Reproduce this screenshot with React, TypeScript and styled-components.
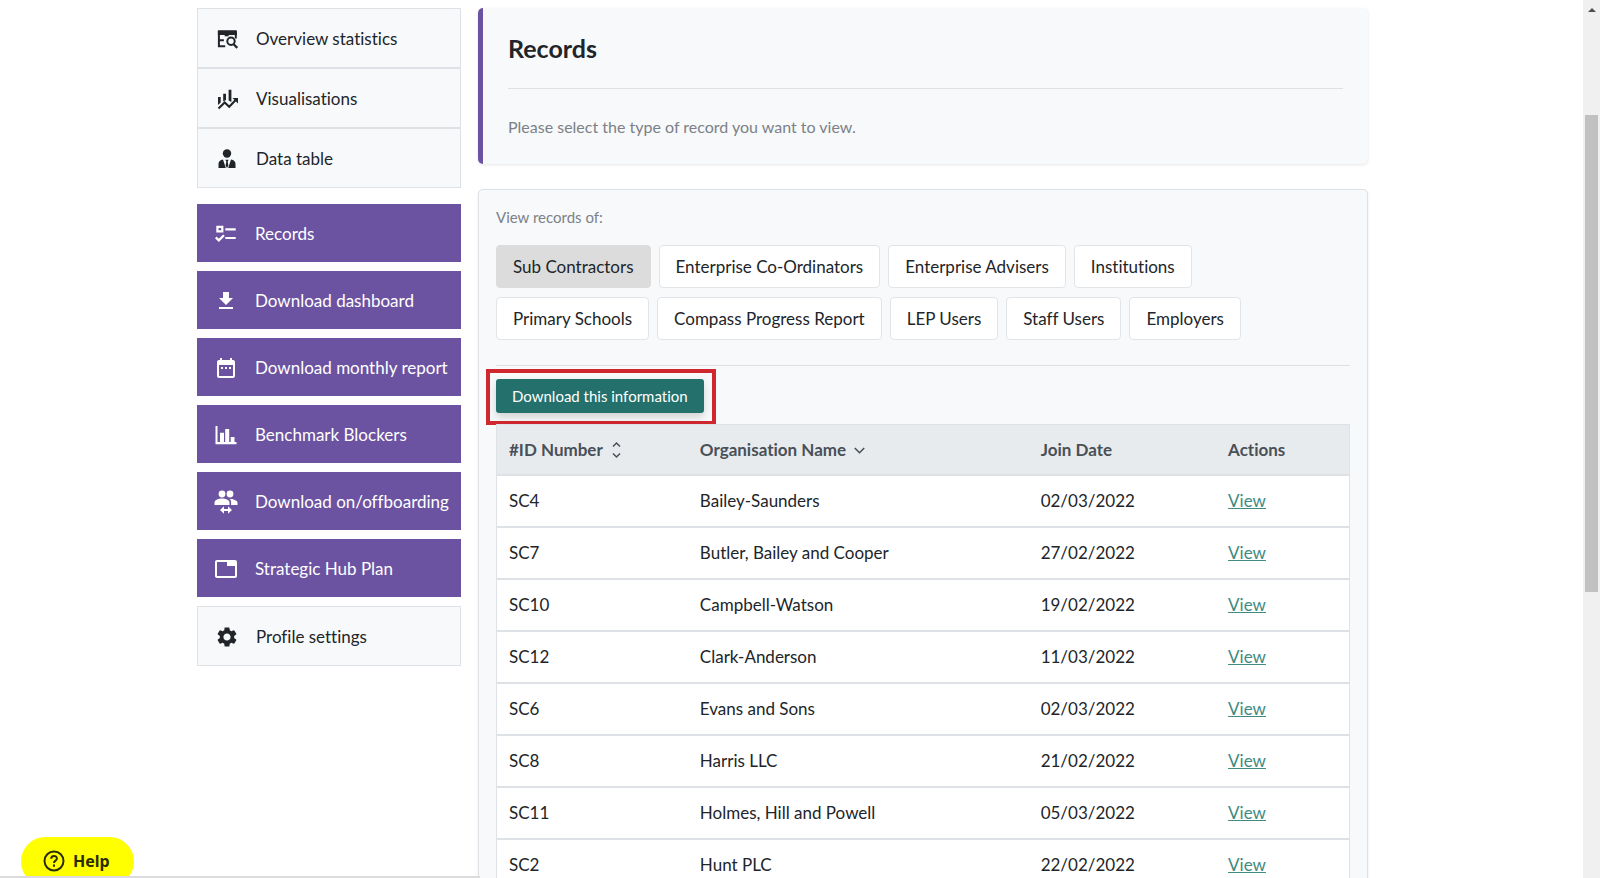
import React from "react";
import styled, { createGlobalStyle } from "styled-components";
import { MdDateRange, MdDownload, MdSettings, MdTab } from "react-icons/md";

const GlobalStyle = createGlobalStyle`
  *, *::before, *::after { box-sizing: border-box; }
  body {
    margin: 0;
    background: #fff;
    color: #212529;
    font-family: Lato, "Liberation Sans", sans-serif;
    font-size: 17px;
    line-height: 24px;
    font-variant-ligatures: none;
  }
  button { font: inherit; font-variant-ligatures: inherit; color: inherit; cursor: pointer; }
`;

const Shell = styled.div`
  display: flex;
  height: 100vh;
  overflow: hidden;
`;

const Viewport = styled.div`
  flex: 1;
  min-width: 0;
  overflow-y: auto;
  scrollbar-width: none;
`;

const Page = styled.div`
  display: grid;
  grid-template-columns: 264px minmax(0, 1fr);
  column-gap: 17px;
  align-items: start;
  max-width: 1189px;
  margin: 0 auto;
  padding: 8px 18px 32px 0;
`;

const Sidebar = styled.nav`
  display: flex;
  flex-direction: column;
  gap: 9px;
`;

const PlainGroup = styled.div`
  display: flex;
  flex-direction: column;
  margin-bottom: 7px;
  border: 1px solid #dee2e6;
  background: #f8f9fb;
`;

const NavLink = styled.a`
  display: flex;
  align-items: center;
  gap: 17px;
  padding: 2px 17px 0;
  white-space: nowrap;
  text-decoration: none;
  svg { flex: none; width: 24px; height: 24px; }
`;

const PlainLink = styled(NavLink)`
  height: 58px;
  color: #212529;
  & + & { height: 60px; border-top: 2px solid #dee2e6; }
`;

const PurpleLink = styled(NavLink)`
  height: 58px;
  background: #6b53a1;
  color: #fff;
`;

const Main = styled.main`
  display: flex;
  flex-direction: column;
  gap: 25px;
`;

const Intro = styled.header`
  padding: 24px 25px 25px 25px;
  border-left: 5px solid #6b53a1;
  border-radius: 5px;
  background: #f8f9fb;
  box-shadow: 0 1px 3px rgba(0, 0, 0, 0.1);
`;

const Title = styled.h1`
  margin: 0;
  padding-bottom: 24px;
  border-bottom: 1px solid #dee2e6;
  font-size: 25px;
  line-height: 32px;
  font-weight: 700;
`;

const Lead = styled.p`
  margin: 26px 0 0;
  color: #7b8187;
  font-size: 16px;
`;

const Panel = styled.section`
  padding: 15px 17px 32px;
  border: 1px solid #dee2e6;
  border-radius: 5px;
  background: #f8f9fb;
  box-shadow: 0 1px 3px rgba(0, 0, 0, 0.08);
`;

const FilterLabel = styled.p`
  margin: 0 0 16px;
  color: #7b8187;
  font-size: 15px;
`;

const Filters = styled.div`
  display: flex;
  flex-wrap: wrap;
  gap: 9px 8px;
  padding-bottom: 25px;
  border-bottom: 1px solid #dee2e6;
`;

const FilterButton = styled.button<{ $active?: boolean }>`
  height: 43px;
  padding: 0 16px;
  border: 1px solid ${(p) => (p.$active ? "#dcdcdc" : "#e2e5e8")};
  border-radius: 4px;
  background: ${(p) => (p.$active ? "#dcdcdc" : "#fff")};
`;

const Highlight = styled.div`
  width: fit-content;
  margin: 3px 0 -1px -10px;
  padding: 6px 8px 8px 6px;
  border: 4px solid #d0282f;
`;

const DownloadButton = styled.button`
  display: block;
  height: 34px;
  padding: 0 16px;
  border: 0;
  border-radius: 3px;
  background: #24706c;
  color: #fff;
  font-size: 15px;
  box-shadow: 0 4px 8px rgba(0, 0, 0, 0.16);
`;

const Table = styled.table`
  width: 100%;
  table-layout: fixed;
  border-collapse: separate;
  border-spacing: 0;
  border: 1px solid #dee2e6;
  background: #fff;
`;

const Th = styled.th<{ $width?: string }>`
  width: ${(p) => p.$width ?? "auto"};
  height: 51px;
  padding: 0 12px;
  border-bottom: 2px solid #dee2e6;
  background: #e8ebee;
  color: #495057;
  font-weight: 700;
  text-align: left;
`;

const SortButton = styled.button`
  display: inline-flex;
  align-items: center;
  gap: 8px;
  padding: 0;
  border: 0;
  background: none;
  font-weight: 700;
  svg { width: 11px; height: 18px; }
`;

const Td = styled.td`
  height: 52px;
  padding: 0 12px;
  border-bottom: 2px solid #dee2e6;
`;

const ViewLink = styled.a`
  color: #3f8a82;
  text-decoration: underline;
`;

const ScrollTrack = styled.div`
  display: flex;
  flex-direction: column;
  flex: none;
  width: 17px;
  padding: 8px 2px;
  background: #f0f0f0;
`;

const ScrollArrow = styled.svg`
  width: 8px;
  height: 4px;
  margin: 0 auto;
`;

const ScrollSpace = styled.div`
  flex: 103;
`;

const ScrollThumb = styled.div`
  flex: 477;
  background: #c1c1c1;
`;

const ScrollRest = styled.div`
  flex: 278;
`;

const HelpButton = styled.button`
  position: fixed;
  left: 21px;
  bottom: -8px;
  display: flex;
  align-items: center;
  gap: 8px;
  height: 49px;
  padding: 0 24px 2px 22px;
  border: 0;
  border-radius: 25px;
  background: #ff0;
  color: #2b2b00;
  font-family: "Noto Sans", sans-serif;
  font-size: 16px;
  font-weight: 700;
  svg { width: 22px; height: 22px; }
`;

const StatusEdge = styled.div`
  position: fixed;
  left: 0;
  bottom: 0;
  width: 30%;
  height: 2px;
  background: #dcdcdc;
`;

const OverviewIcon = () => (
  <svg viewBox="0 0 24 24" fill="none" stroke="currentColor" strokeWidth="2" aria-hidden="true">
    <path d="M3 3.300h18a1 1 0 0 1 1 1V8H2.900V4z" fill="currentColor" stroke="none" />
    <path d="M3.900 4v15.300h6.300M3.900 13.200h5M20.800 6v5.500" />
    <path d="M9.700 7.500h4v1.800h-4z" fill="currentColor" stroke="none" />
    <circle cx="16" cy="14.300" r="3.700" />
    <path d="M18.600 17.200l3.700 3.700" strokeWidth="2.200" />
  </svg>
);

const VisualisationsIcon = () => (
  <svg viewBox="0 0 24 24" fill="currentColor" aria-hidden="true">
    <path d="M3 10h2.700v5.500L3 18zM8.200 6.700H11V13l-2.800 1.500zM13.600 2.700h2.800V15l-2.800-1.500z" />
    <path d="M3.500 21.500l6.200-6 4.500 4.300 7-7.300" fill="none" stroke="currentColor" strokeWidth="2" />
    <path d="M17.500 11H23v5.500z" />
  </svg>
);

const PersonIcon = () => (
  <svg viewBox="0 0 24 24" fill="currentColor" aria-hidden="true">
    <circle cx="12" cy="6.500" r="4.200" />
    <path d="M8 12.400L10.800 21H3.500v-4.200c0-2.400 1.700-3.900 4.500-4.400zM16 12.400L13.200 21h7.300v-4.200c0-2.400-1.700-3.900-4.500-4.400zM10.400 12.800h3.200l-.9 2 .7 3.700L12 21l-1.400-2.500.7-3.700z" />
  </svg>
);

const RecordsIcon = () => (
  <svg viewBox="0 0 24 24" fill="none" stroke="currentColor" strokeWidth="2.200" aria-hidden="true">
    <path d="M3.400 4.900h4.900v4.400H3.400z" />
    <path d="M11.300 7.400h10.400M11.300 16h10.400" />
    <path d="M1.800 15.400l3 3 5.200-5.200" />
  </svg>
);

const BlockersIcon = () => (
  <svg viewBox="0 0 24 24" fill="currentColor" aria-hidden="true">
    <path d="M1.500 3h2v16H6V9.800h4V19h1.200V6h4v13h1.500v-5h3.800v5h2v2.200h-21z" />
  </svg>
);

const BoardingIcon = () => (
  <svg viewBox="0 0 24 24" fill="currentColor" aria-hidden="true">
    <circle cx="8" cy="4" r="3.400" />
    <circle cx="16" cy="4" r="3.400" />
    <path d="M.5 15v-2.300C.5 10 4.800 8.600 8 8.600s7.500 1.400 7.500 4.100V15z" />
    <path d="M15.500 8.700c3.500.2 8 1.500 8 4V15h-6.400v-2.300c0-1.700-.4-3-1.600-4z" />
    <path d="M6 20l4-3.700v2.700h4v-2.700l4 3.700-4 3.700V21h-4v2.700z" />
  </svg>
);

const SortBothIcon = () => (
  <svg viewBox="0 0 11 18" fill="none" stroke="currentColor" strokeWidth="1.500" aria-hidden="true">
    <path d="M2 5.500L5.500 2 9 5.500M2 12.500L5.500 16 9 12.500" />
  </svg>
);

const SortDownIcon = () => (
  <svg viewBox="0 0 11 18" fill="none" stroke="currentColor" strokeWidth="1.600" aria-hidden="true">
    <path d="M.8 7l4.700 4.700L10.200 7" />
  </svg>
);

const HelpIcon = () => (
  <svg viewBox="0 0 22 22" fill="none" stroke="currentColor" strokeWidth="2" aria-hidden="true">
    <circle cx="11" cy="11" r="9.500" />
    <path d="M8.200 8.800c0-3.800 5.700-3.600 5.700-.4 0 2.200-2.900 2.200-2.900 4.500" />
    <path d="M11 14.600v2.200" />
  </svg>
);

const overviewLinks = [
  { label: "Overview statistics", icon: <OverviewIcon /> },
  { label: "Visualisations", icon: <VisualisationsIcon /> },
  { label: "Data table", icon: <PersonIcon /> },
];

const actionLinks = [
  { label: "Records", icon: <RecordsIcon /> },
  { label: "Download dashboard", icon: <MdDownload /> },
  { label: "Download monthly report", icon: <MdDateRange /> },
  { label: "Benchmark Blockers", icon: <BlockersIcon /> },
  { label: "Download on/offboarding", icon: <BoardingIcon /> },
  { label: "Strategic Hub Plan", icon: <MdTab /> },
];

const filters = [
  "Sub Contractors",
  "Enterprise Co-Ordinators",
  "Enterprise Advisers",
  "Institutions",
  "Primary Schools",
  "Compass Progress Report",
  "LEP Users",
  "Staff Users",
  "Employers",
];

const records = [
  ["SC4", "Bailey-Saunders", "02/03/2022"],
  ["SC7", "Butler, Bailey and Cooper", "27/02/2022"],
  ["SC10", "Campbell-Watson", "19/02/2022"],
  ["SC12", "Clark-Anderson", "11/03/2022"],
  ["SC6", "Evans and Sons", "02/03/2022"],
  ["SC8", "Harris LLC", "21/02/2022"],
  ["SC11", "Holmes, Hill and Powell", "05/03/2022"],
  ["SC2", "Hunt PLC", "22/02/2022"],
];

export default function App() {
  const [active, setActive] = React.useState("Sub Contractors");

  return (
    <Shell>
      <GlobalStyle />
      <Viewport>
        <Page>
          <Sidebar>
            <PlainGroup>
              {overviewLinks.map((l) => (
                <PlainLink href="#" key={l.label}>{l.icon}{l.label}</PlainLink>
              ))}
            </PlainGroup>
            {actionLinks.map((l) => (
              <PurpleLink href="#" key={l.label}>{l.icon}{l.label}</PurpleLink>
            ))}
            <PlainGroup>
              <PlainLink href="#"><MdSettings />Profile settings</PlainLink>
            </PlainGroup>
          </Sidebar>
          <Main>
            <Intro>
              <Title>Records</Title>
              <Lead>Please select the type of record you want to view.</Lead>
            </Intro>
            <Panel>
              <FilterLabel id="filter-label">View records of:</FilterLabel>
              <Filters role="group" aria-labelledby="filter-label">
                {filters.map((f) => (
                  <FilterButton
                    key={f}
                    type="button"
                    $active={f === active}
                    aria-pressed={f === active}
                    onClick={() => setActive(f)}
                  >
                    {f}
                  </FilterButton>
                ))}
              </Filters>
              <Highlight>
                <DownloadButton type="button">Download this information</DownloadButton>
              </Highlight>
              <Table>
                <thead>
                  <tr>
                    <Th $width="22.4%"><SortButton type="button">#ID Number<SortBothIcon /></SortButton></Th>
                    <Th $width="40%"><SortButton type="button">Organisation Name<SortDownIcon /></SortButton></Th>
                    <Th $width="22%">Join Date</Th>
                    <Th>Actions</Th>
                  </tr>
                </thead>
                <tbody>
                  {records.map(([id, name, date]) => (
                    <tr key={id}>
                      <Td>{id}</Td>
                      <Td>{name}</Td>
                      <Td>{date}</Td>
                      <Td><ViewLink href="#">View</ViewLink></Td>
                    </tr>
                  ))}
                </tbody>
              </Table>
            </Panel>
          </Main>
        </Page>
      </Viewport>
      <ScrollTrack aria-hidden="true">
        <ScrollArrow viewBox="0 0 8 4"><path d="M0 4l4-4 4 4z" fill="#505050" /></ScrollArrow>
        <ScrollSpace />
        <ScrollThumb />
        <ScrollRest />
      </ScrollTrack>
      <HelpButton type="button"><HelpIcon />Help</HelpButton>
      <StatusEdge />
    </Shell>
  );
}
